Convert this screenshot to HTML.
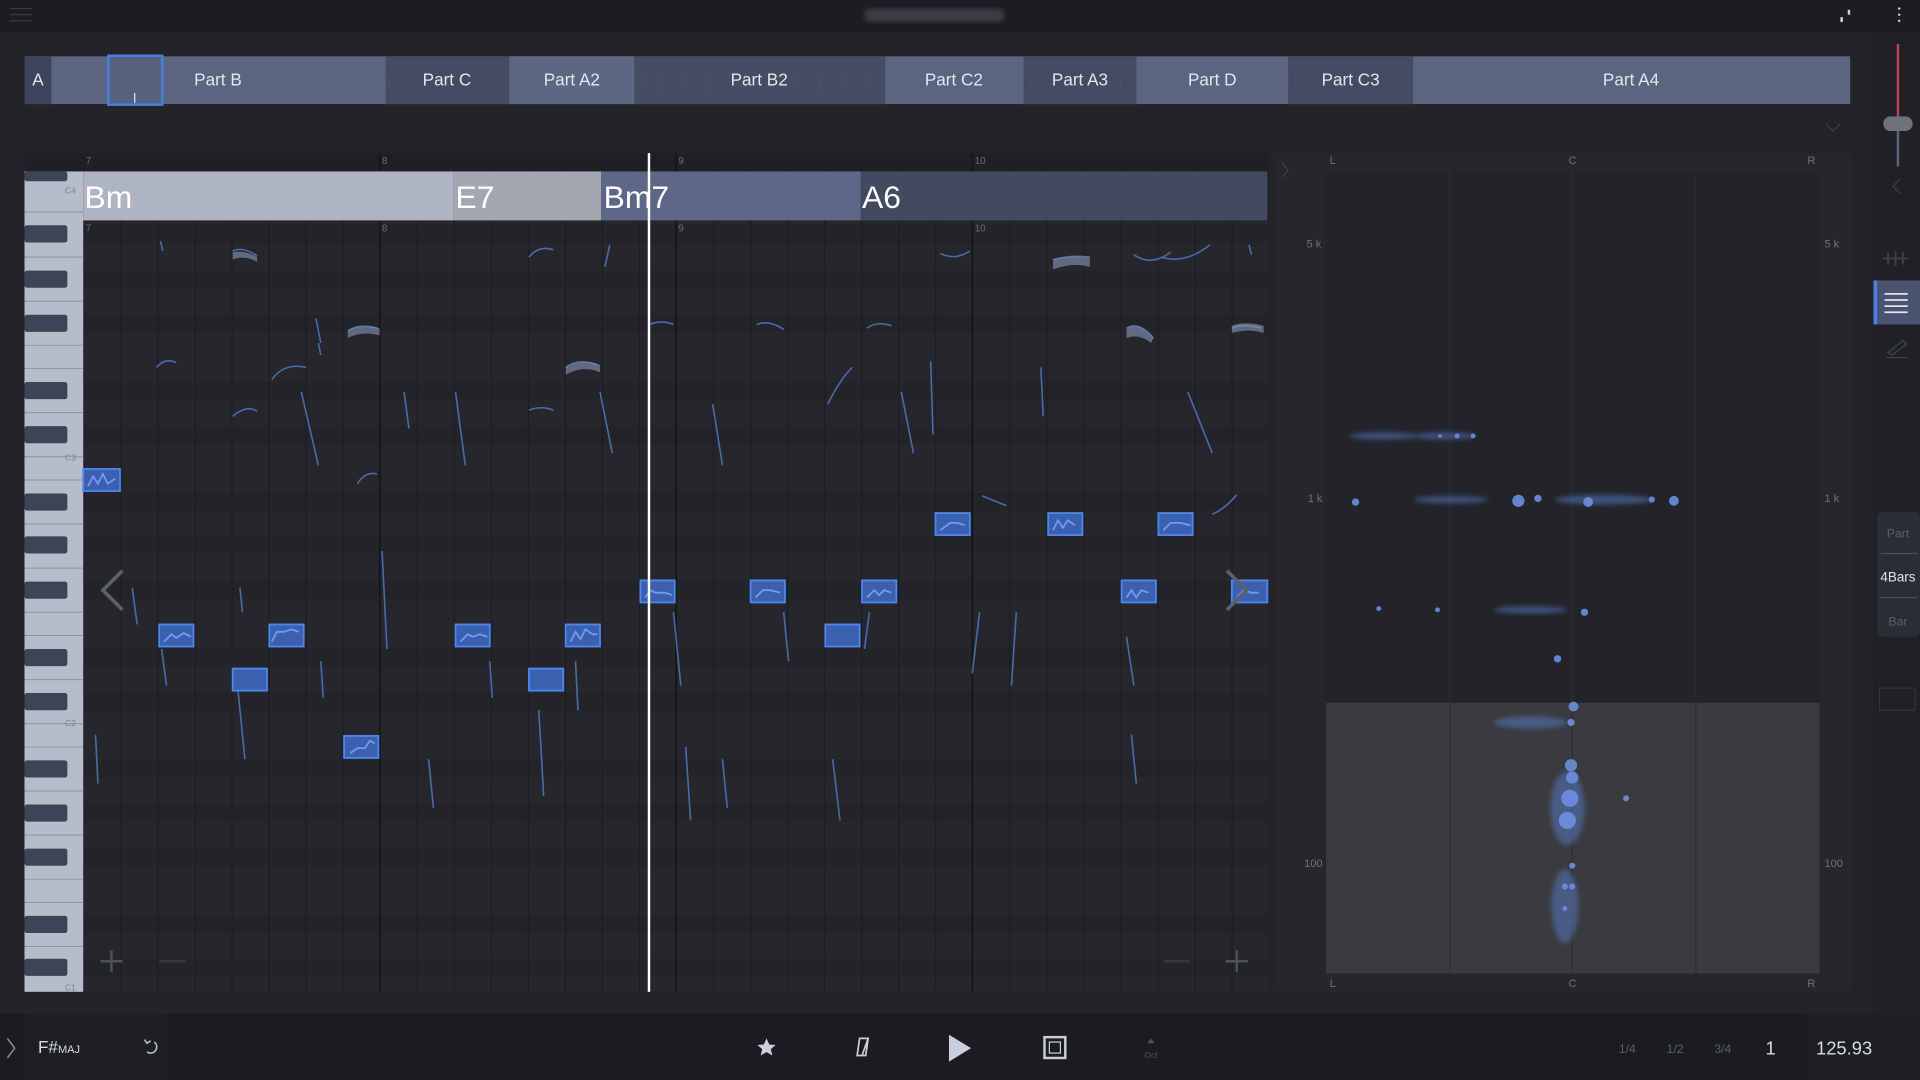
<!DOCTYPE html>
<html><head><meta charset="utf-8"><style>
html,body{margin:0;padding:0;background:#222428;overflow:hidden;width:1920px;height:1080px}
svg{display:block}
text{font-family:"Liberation Sans",sans-serif}
</style></head><body>
<svg width="1920" height="1080" viewBox="0 0 1568 882" xmlns="http://www.w3.org/2000/svg">
<defs>
<pattern id="vg" x="68" y="0" width="30.25" height="882" patternUnits="userSpaceOnUse"><rect width="30.25" height="882" fill="none"/><line x1="0.5" y1="0" x2="0.5" y2="882" stroke="#1c1d21" stroke-width="1"/></pattern>
<filter id="bl"><feGaussianBlur stdDeviation="2"/></filter>
<filter id="bl2"><feGaussianBlur stdDeviation="5"/></filter>
</defs>
<rect width="1568" height="882" fill="#222428"/>
<rect width="1568" height="26" fill="#1b1d21"/>
<g stroke="#3a3d44" stroke-width="1"><line x1="8" y1="7" x2="26" y2="7"/><line x1="8" y1="12" x2="26" y2="12"/><line x1="8" y1="17" x2="26" y2="17"/></g>
<rect x="706" y="7" width="114" height="11" rx="5" fill="#3b3e45" filter="url(#bl)"/>
<g fill="#cfd3da"><rect x="1509" y="8" width="2" height="4"/><rect x="1503" y="14" width="2" height="4"/><circle cx="1551" cy="7" r="1"/><circle cx="1551" cy="12" r="1"/><circle cx="1551" cy="17" r="1"/></g>
<rect x="1530" y="26" width="38" height="802" fill="#1f2125"/>
<rect x="1549" y="36" width="2" height="64" fill="#c2415a"/>
<rect x="1549" y="104" width="2" height="32" fill="#5a6580"/>
<rect x="1538" y="95" width="24" height="12" rx="6" fill="#6d727c"/>
<path d="M1552 146 L1546 152 L1552 158" stroke="#3c4049" fill="none"/>
<path d="M1538 211 h20 M1542 206 v10 M1548 205 v12 M1554 206 v10" stroke="#3e424b" stroke-width="1.5"/>
<rect x="1530" y="229" width="38" height="36" fill="#4a5470"/><rect x="1530" y="229" width="3" height="36" fill="#4a7fe0"/>
<g stroke="#dfe3ea" stroke-width="1.5"><line x1="1539" y1="240" x2="1558" y2="240"/><line x1="1539" y1="245" x2="1558" y2="245"/><line x1="1539" y1="250" x2="1558" y2="250"/><line x1="1539" y1="255" x2="1558" y2="255"/></g>
<path d="M1542 288 L1554 278 L1557 281 L1545 290 Z M1540 292 h18" stroke="#40444d" fill="none"/>
<rect x="1533" y="418" width="35" height="102" rx="4" fill="#2a2d33"/>
<text x="1550" y="439" font-size="10" fill="#5b606a" text-anchor="middle">Part</text>
<line x1="1536" y1="452" x2="1566" y2="452" stroke="#4b5060"/>
<text x="1550" y="475" font-size="11" fill="#dfe3ea" text-anchor="middle">4Bars</text>
<line x1="1536" y1="488" x2="1566" y2="488" stroke="#4b5060"/>
<text x="1550" y="511" font-size="10" fill="#5b606a" text-anchor="middle">Bar</text>
<rect x="1535" y="562" width="29" height="18" fill="none" stroke="#33363d"/>
<rect x="20" y="46" width="1491" height="39" fill="#5a6580"/>
<rect x="20" y="46" width="22" height="39" fill="#3c4559"/>
<rect x="315" y="46" width="101" height="39" fill="#434c61"/>
<rect x="416" y="46" width="102" height="39" fill="#5c6783"/>
<rect x="518" y="46" width="205" height="39" fill="#444d62"/>
<rect x="836" y="46" width="92" height="39" fill="#434c61"/>
<rect x="1052" y="46" width="102" height="39" fill="#434c61"/>
<g stroke="#4e576d" stroke-width="1" opacity=".5">
<path d="M318 70 v-8 M324 72 v-12 M330 68 v-6 M338 73 v-14 M394 71 v-10 M402 69 v-7 M410 72 v-12 M525 70 v-9 M540 73 v-12 M560 71 v-8 M580 74 v-13 M650 70 v-8 M670 73 v-12 M690 72 v-10 M710 70 v-8 M842 71 v-9 M915 72 v-11 M1058 70 v-8 M1135 73 v-12 M1145 76 v-16"/>
</g>
<rect x="88.5" y="45.5" width="44" height="40" fill="#56617e" stroke="#4a7fe0" stroke-width="2"/>
<line x1="110" y1="76" x2="110" y2="84" stroke="#e6e9ef" stroke-width="1"/>
<g font-size="14" fill="#e3e6ec" text-anchor="middle">
<text x="31" y="70">A</text><text x="178" y="70">Part B</text><text x="365" y="70">Part C</text><text x="467" y="70">Part A2</text><text x="620" y="70">Part B2</text><text x="779" y="70">Part C2</text><text x="882" y="70">Part A3</text><text x="990" y="70">Part D</text><text x="1103" y="70">Part C3</text><text x="1332" y="70">Part A4</text>
</g>
<path d="M1491 101 L1497 107 L1503 101" stroke="#3b3f47" fill="none"/>
<rect x="20" y="125" width="1016" height="685" fill="#1f2024"/>
<rect x="68" y="180" width="968" height="630" fill="#25272c"/>
<g fill="#222428">
<rect x="68" y="184" width="968" height="14"/><rect x="68" y="221" width="968" height="14"/><rect x="68" y="257" width="968" height="14"/><rect x="68" y="312" width="968" height="14"/><rect x="68" y="348" width="968" height="14"/><rect x="68" y="403" width="968" height="14"/><rect x="68" y="438" width="968" height="14"/><rect x="68" y="475" width="968" height="14"/><rect x="68" y="530" width="968" height="14"/><rect x="68" y="566" width="968" height="14"/><rect x="68" y="621" width="968" height="14"/><rect x="68" y="657" width="968" height="14"/><rect x="68" y="693" width="968" height="14"/><rect x="68" y="748" width="968" height="14"/><rect x="68" y="783" width="968" height="14"/>
</g>
<rect x="68" y="125" width="968" height="685" fill="url(#vg)"/>
<g stroke="#141518" stroke-width="1.2"><line x1="310" y1="125" x2="310" y2="810"/><line x1="552" y1="125" x2="552" y2="810"/><line x1="794" y1="125" x2="794" y2="810"/></g>
<g font-size="8" fill="#666b75"><text x="70" y="134">7</text><text x="312" y="134">8</text><text x="554" y="134">9</text><text x="796" y="134">10</text><text x="70" y="189">7</text><text x="312" y="189">8</text><text x="554" y="189">9</text><text x="796" y="189">10</text></g>
<rect x="20" y="140" width="48" height="670" fill="#b6bcc8"/>
<g stroke="#8c93a2" stroke-width="0.8">
<line x1="20" y1="173" x2="68" y2="173"/><line x1="20" y1="210" x2="68" y2="210"/><line x1="20" y1="246" x2="68" y2="246"/><line x1="20" y1="282" x2="68" y2="282"/><line x1="20" y1="301" x2="68" y2="301"/><line x1="20" y1="337" x2="68" y2="337"/><line x1="20" y1="373" x2="68" y2="373"/><line x1="20" y1="392" x2="68" y2="392"/><line x1="20" y1="428" x2="68" y2="428"/><line x1="20" y1="464" x2="68" y2="464"/><line x1="20" y1="500" x2="68" y2="500"/><line x1="20" y1="519" x2="68" y2="519"/><line x1="20" y1="555" x2="68" y2="555"/><line x1="20" y1="591" x2="68" y2="591"/><line x1="20" y1="610" x2="68" y2="610"/><line x1="20" y1="646" x2="68" y2="646"/><line x1="20" y1="682" x2="68" y2="682"/><line x1="20" y1="718" x2="68" y2="718"/><line x1="20" y1="737" x2="68" y2="737"/><line x1="20" y1="773" x2="68" y2="773"/>
</g>
<g fill="#3d4456">
<rect x="20" y="140" width="35" height="8" rx="2"/><rect x="20" y="184" width="35" height="14" rx="2"/><rect x="20" y="221" width="35" height="14" rx="2"/><rect x="20" y="257" width="35" height="14" rx="2"/><rect x="20" y="312" width="35" height="14" rx="2"/><rect x="20" y="348" width="35" height="14" rx="2"/><rect x="20" y="403" width="35" height="14" rx="2"/><rect x="20" y="438" width="35" height="14" rx="2"/><rect x="20" y="475" width="35" height="14" rx="2"/><rect x="20" y="530" width="35" height="14" rx="2"/><rect x="20" y="566" width="35" height="14" rx="2"/><rect x="20" y="621" width="35" height="14" rx="2"/><rect x="20" y="657" width="35" height="14" rx="2"/><rect x="20" y="693" width="35" height="14" rx="2"/><rect x="20" y="748" width="35" height="14" rx="2"/><rect x="20" y="783" width="35" height="14" rx="2"/>
</g>
<g font-size="7" fill="#7a808c"><text x="53" y="158">C4</text><text x="53" y="376">C3</text><text x="53" y="593">C2</text><text x="53" y="809">C1</text></g>
<rect x="68" y="140" width="302" height="40" fill="#aeb4c1"/>
<rect x="370" y="140" width="121" height="40" fill="#a2a7b1"/>
<rect x="491" y="140" width="212" height="40" fill="#5d6886"/>
<rect x="703" y="140" width="332" height="40" fill="#414a5e"/>
<g font-size="26" fill="#ffffff"><text x="69" y="170">Bm</text><text x="372" y="170">E7</text><text x="493" y="170">Bm7</text><text x="704" y="170">A6</text></g>
<g stroke="#5a82d0" stroke-width="1.3" fill="none" opacity=".75">
<path d="M131 197 l2 8 M190 205 q8 -4 20 4 M258 260 l4 20 M284 270 q10 -6 24 -2 M260 280 l2 10 M128 300 q6 -8 16 -4 M190 340 q12 -10 20 -4 M222 310 q10 -14 28 -10 M246 320 l14 60 M292 395 q6 -10 16 -8 M312 450 l4 80 M330 320 l4 30 M372 320 l8 60 M432 335 q10 -4 20 0 M432 210 q8 -10 20 -6 M462 300 q10 -8 26 -2 M490 320 l10 50 M498 200 l-4 18 M530 265 q10 -4 20 0 M582 330 l8 50 M618 265 q10 -4 22 4 M676 330 q10 -20 20 -30 M708 268 q8 -6 20 -2 M736 320 l10 50 M768 207 q12 6 24 -2 M860 212 q14 -4 30 -2 M920 268 q10 -6 22 8 M926 208 q14 10 30 -2 M948 210 q20 6 40 -10 M970 320 l20 50 M1006 268 q8 -4 24 0 M1020 200 l2 8 M760 295 l2 60 M850 300 l2 40 M802 405 q10 4 20 8 M990 420 q10 -4 20 -16 M194 560 l6 60 M132 530 l4 30 M350 620 l4 40 M440 580 l4 70 M560 610 l4 60 M590 620 l4 40 M680 620 l6 50 M800 500 l-6 50 M830 500 l-4 60 M920 520 l6 40 M924 600 l4 40 M262 540 l2 30 M400 540 l2 30 M470 540 l2 40 M108 480 l4 30 M640 500 l4 40 M710 500 l-4 30 M550 500 l6 60 M78 600 l2 40 M196 480 l2 20"/>
</g>
<g fill="#8a98b8" opacity=".6"><path d="M190 206 q10 -2 20 4 l0 4 q-10 -6 -20 -2 Z"/><path d="M284 270 q10 -6 26 -2 l0 6 q-14 -4 -26 2 Z"/><path d="M462 300 q12 -8 28 -2 l0 6 q-14 -6 -28 2 Z"/><path d="M860 212 q14 -4 30 -2 l0 8 q-14 -4 -30 2 Z"/><path d="M920 268 q10 -6 22 8 l-2 4 q-10 -8 -20 -4 Z"/><path d="M1006 266 q10 -4 26 0 l0 6 q-12 -4 -26 0 Z"/></g>
<g fill="#3c5fae" stroke="#4d86ee" stroke-width="1.5">
<rect x="68" y="383" width="30" height="18"/><rect x="130" y="510" width="28" height="18"/><rect x="190" y="546" width="28" height="18"/><rect x="220" y="510" width="28" height="18"/><rect x="281" y="601" width="28" height="18"/><rect x="372" y="510" width="28" height="18"/><rect x="432" y="546" width="28" height="18"/><rect x="462" y="510" width="28" height="18"/><rect x="523" y="474" width="28" height="18"/><rect x="613" y="474" width="28" height="18"/><rect x="674" y="510" width="28" height="18"/><rect x="704" y="474" width="28" height="18"/><rect x="764" y="419" width="28" height="18"/><rect x="856" y="419" width="28" height="18"/><rect x="946" y="419" width="28" height="18"/><rect x="916" y="474" width="28" height="18"/><rect x="1006" y="474" width="29" height="18"/>
</g>
<g stroke="#6f9bf0" stroke-width="1.5" fill="none">
<path d="M72 397 l4 -8 l4 6 l4 -8 l4 8 l6 -4 M134 524 l6 -6 l4 3 l6 -4 l6 3 M222 524 l4 -8 l6 0 l6 -2 l6 2 M286 615 l6 -4 l6 0 l4 -6 l4 2 M376 524 l6 -6 l4 2 l6 -2 l6 2 M466 524 l4 -8 l4 6 l4 -8 l6 4 l4 0 M527 488 l4 -6 l4 2 l8 0 l6 2 M617 488 l6 -6 l6 0 l8 2 M708 488 l6 -6 l4 4 l4 -4 l6 2 M768 433 l8 -6 l6 0 l6 2 M860 433 l4 -8 l4 6 l4 -6 l6 4 M950 433 l6 -6 l8 0 l8 2 M920 488 l4 -6 l4 6 l4 -6 l6 2 M1010 488 l6 -6 l6 2 l6 0"/>
</g>
<rect x="529" y="125" width="2" height="685" fill="#ffffff"/>
<path d="M100 466 L84 482 L100 498" stroke="#5a5f69" stroke-width="3" fill="none"/>
<path d="M1002 466 L1018 482 L1002 498" stroke="#5a5f69" stroke-width="3" fill="none"/>
<path d="M82 785 h18 M91 776 v18 M1001 785 h18 M1010 776 v18" stroke="#4d515a" stroke-width="2"/>
<path d="M130 785 h22 M950 785 h22" stroke="#35383f" stroke-width="2"/>
<rect x="1040" y="125" width="471" height="685" fill="#25272b"/>
<rect x="1083" y="140" width="403" height="434" fill="#222429"/>
<rect x="1083" y="574" width="403" height="221" fill="#3a3b3e"/>
<g stroke="#2c2e33"><line x1="1184" y1="140" x2="1184" y2="795"/><line x1="1284" y1="140" x2="1284" y2="795"/><line x1="1385" y1="140" x2="1385" y2="795"/></g>
<path d="M1047 133 L1052 139 L1047 145" stroke="#3c4049" fill="none"/>
<g font-size="9" fill="#6e737c"><text x="1086" y="134">L</text><text x="1281" y="134">C</text><text x="1476" y="134">R</text><text x="1086" y="806">L</text><text x="1281" y="806">C</text><text x="1476" y="806">R</text><text x="1067" y="202">5 k</text><text x="1490" y="202">5 k</text><text x="1068" y="410">1 k</text><text x="1490" y="410">1 k</text><text x="1065" y="708">100</text><text x="1490" y="708">100</text></g>
<g fill="#5577c0" opacity=".55" filter="url(#bl)">
<ellipse cx="1130" cy="356" rx="28" ry="3"/><ellipse cx="1180" cy="356" rx="25" ry="3"/><ellipse cx="1185" cy="408" rx="30" ry="3"/><ellipse cx="1310" cy="408" rx="40" ry="4"/><ellipse cx="1250" cy="498" rx="30" ry="3"/><ellipse cx="1280" cy="660" rx="14" ry="30"/><ellipse cx="1278" cy="740" rx="11" ry="30"/><ellipse cx="1250" cy="590" rx="30" ry="5"/>
</g>
<g fill="#6d8fe0" opacity=".9">
<circle cx="1107" cy="410" r="3"/><circle cx="1240" cy="409" r="5"/><circle cx="1256" cy="407" r="3"/><circle cx="1297" cy="410" r="4"/><circle cx="1349" cy="408" r="2.5"/><circle cx="1367" cy="409" r="4"/><circle cx="1294" cy="500" r="3"/><circle cx="1272" cy="538" r="3"/><circle cx="1285" cy="577" r="4"/><circle cx="1283" cy="590" r="3"/><circle cx="1283" cy="625" r="5"/><circle cx="1284" cy="635" r="5"/><circle cx="1282" cy="652" r="7"/><circle cx="1280" cy="670" r="7"/><circle cx="1284" cy="724" r="2.5"/><circle cx="1278" cy="724" r="2.5"/><circle cx="1284" cy="707" r="2.5"/><circle cx="1278" cy="742" r="2"/><circle cx="1174" cy="498" r="2"/><circle cx="1126" cy="497" r="2"/><circle cx="1328" cy="652" r="2.5"/><circle cx="1176" cy="356" r="1.5"/><circle cx="1190" cy="356" r="2"/><circle cx="1203" cy="356" r="2"/></g>
<rect x="0" y="828" width="1568" height="54" fill="#1a1c20"/>
<rect x="20" y="828" width="116" height="54" fill="#1d1f23"/>
<rect x="1476" y="828" width="92" height="54" fill="#1d1f23"/>
<path d="M6 848 L12 856 L6 864" stroke="#8a8f98" fill="none" stroke-width="1.2"/>
<text x="31" y="860" font-size="14" fill="#d8dce3">F#<tspan font-size="9">MAJ</tspan></text>
<path d="M126 851 a5 5 0 1 1 -6 8 M118 849 l2 3 l3 -2" stroke="#b6bbc4" fill="none" stroke-width="1.3"/>
<path d="M626 848 l2.2 5 l5.3 0.4 l-4 3.4 l1.3 5.2 l-4.8 -2.8 l-4.8 2.8 l1.3 -5.2 l-4 -3.4 l5.3 -0.4 Z" fill="#c9d0dc"/>
<path d="M702 848 h7 l-2 14 h-7 Z M704 862 l5 -14" stroke="#c9d0dc" fill="none" stroke-width="1.4"/>
<path d="M775 845 L793 856 L775 867 Z" fill="#c9d0dc"/>
<rect x="853" y="847" width="17" height="17" fill="none" stroke="#c9d0dc" stroke-width="2"/><rect x="857" y="851" width="9" height="9" fill="#1a1c20" stroke="#c9d0dc"/>
<path d="M937 852 l3 -4 l3 4 Z" fill="#4d525c"/><text x="940" y="864" font-size="7" fill="#4d525c" text-anchor="middle">Oct</text>
<g font-size="10" fill="#5b606a" text-anchor="middle"><text x="1329" y="860">1/4</text><text x="1368" y="860">1/2</text><text x="1407" y="860">3/4</text></g>
<text x="1446" y="861" font-size="15" fill="#d8dce3" text-anchor="middle">1</text>
<text x="1506" y="861" font-size="15" fill="#d8dce3" text-anchor="middle">125.93</text>
</svg>
</body></html>
